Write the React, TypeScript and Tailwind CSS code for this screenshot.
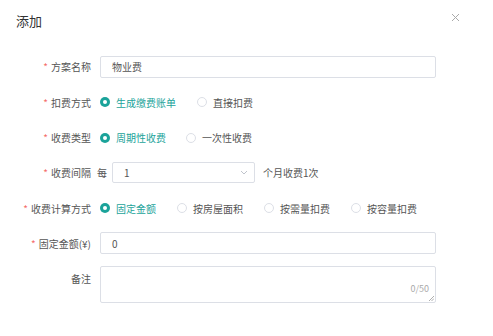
import React from 'react';

const font = { fontFamily: '"Noto Sans CJK SC", "Noto Sans", sans-serif' };

function Radio({ label, checked }: { label: string; checked?: boolean }) {
  return (
    <div className="flex items-center">
      {checked ? (
        <span className="w-[10px] h-[10px] rounded-full bg-[#1ba39a] flex items-center justify-center">
          <span className="w-[4px] h-[4px] rounded-full bg-white" />
        </span>
      ) : (
        <span className="w-[10px] h-[10px] rounded-full border border-[#dcdfe6] bg-white" />
      )}
      <span className={`ml-[6px] ${checked ? 'text-[#1ba39a]' : 'text-[#555]'}`}>{label}</span>
    </div>
  );
}

function Label({ text, required = true }: { text: string; required?: boolean }) {
  return (
    <div className="w-[91px] shrink-0 text-right text-[#555]">
      {required && <span className="text-[#f56c6c] mr-[3px]">*</span>}
      {text}
    </div>
  );
}

export default function App() {
  return (
    <div className="w-[493px] h-[336px] bg-white relative text-[10px]" style={font}>
      <div className="flex items-center justify-between pl-[16px] pr-[33px] h-[41px]">
        <span className="text-[13px] text-[#333]">添加</span>
        <svg width="9" height="9" viewBox="0 0 9 9" className="-mt-[6px]">
          <path d="M1 1L8 8M8 1L1 8" stroke="#aaa" strokeWidth="1" />
        </svg>
      </div>

      <div className="flex flex-col pt-[8px]">
        <div className="flex items-center h-[35px]">
          <Label text="方案名称" />
          <div className="ml-[9px] w-[336px] h-[22px] border border-[#dcdfe6] rounded-[2px] flex items-center pl-[11px] text-[#555]">
            物业费
          </div>
        </div>

        <div className="flex items-center h-[36px]">
          <Label text="扣费方式" />
          <div className="ml-[9px] flex items-center gap-[21px]">
            <Radio label="生成缴费账单" checked />
            <Radio label="直接扣费" />
          </div>
        </div>

        <div className="flex items-center h-[35px]">
          <Label text="收费类型" />
          <div className="ml-[9px] flex items-center gap-[20px]">
            <Radio label="周期性收费" checked />
            <Radio label="一次性收费" />
          </div>
        </div>

        <div className="flex items-center h-[35px]">
          <Label text="收费间隔" />
          <span className="ml-[6px] text-[#555]">每</span>
          <div className="ml-[5px] w-[143px] h-[21px] border border-[#dcdfe6] rounded-[2px] flex items-center justify-between pl-[11px] pr-[6px] text-[#555]">
            <span>1</span>
            <svg width="8" height="5" viewBox="0 0 8 5">
              <path d="M1 1L4 4L7 1" stroke="#c0c4cc" strokeWidth="1" fill="none" />
            </svg>
          </div>
          <span className="ml-[8px] text-[#555]">个月收费1次</span>
        </div>

        <div className="flex items-center h-[36px]">
          <Label text="收费计算方式" />
          <div className="ml-[9px] flex items-center gap-[21px]">
            <Radio label="固定金额" checked />
            <Radio label="按房屋面积" />
            <Radio label="按需量扣费" />
            <Radio label="按容量扣费" />
          </div>
        </div>

        <div className="flex items-center h-[34px]">
          <Label text="固定金额(¥)" />
          <div className="ml-[9px] w-[336px] h-[22px] border border-[#dcdfe6] rounded-[2px] flex items-center pl-[11px] text-[#555]">
            0
          </div>
        </div>

        <div className="flex items-start mt-[6px]">
          <div className="pt-[5px]">
            <Label text="备注" required={false} />
          </div>
          <div className="ml-[9px] w-[336px] h-[37px] border border-[#dcdfe6] rounded-[2px] relative">
            <span className="absolute right-[6px] bottom-[7px] text-[#aaa] text-[9px]">0/50</span>
            <svg width="6" height="6" viewBox="0 0 6 6" className="absolute right-[1px] bottom-[1px]">
              <path d="M1 6L6 1M3.5 6L6 3.5" stroke="#999" strokeWidth="0.8" />
            </svg>
          </div>
        </div>
      </div>
    </div>
  );
}
